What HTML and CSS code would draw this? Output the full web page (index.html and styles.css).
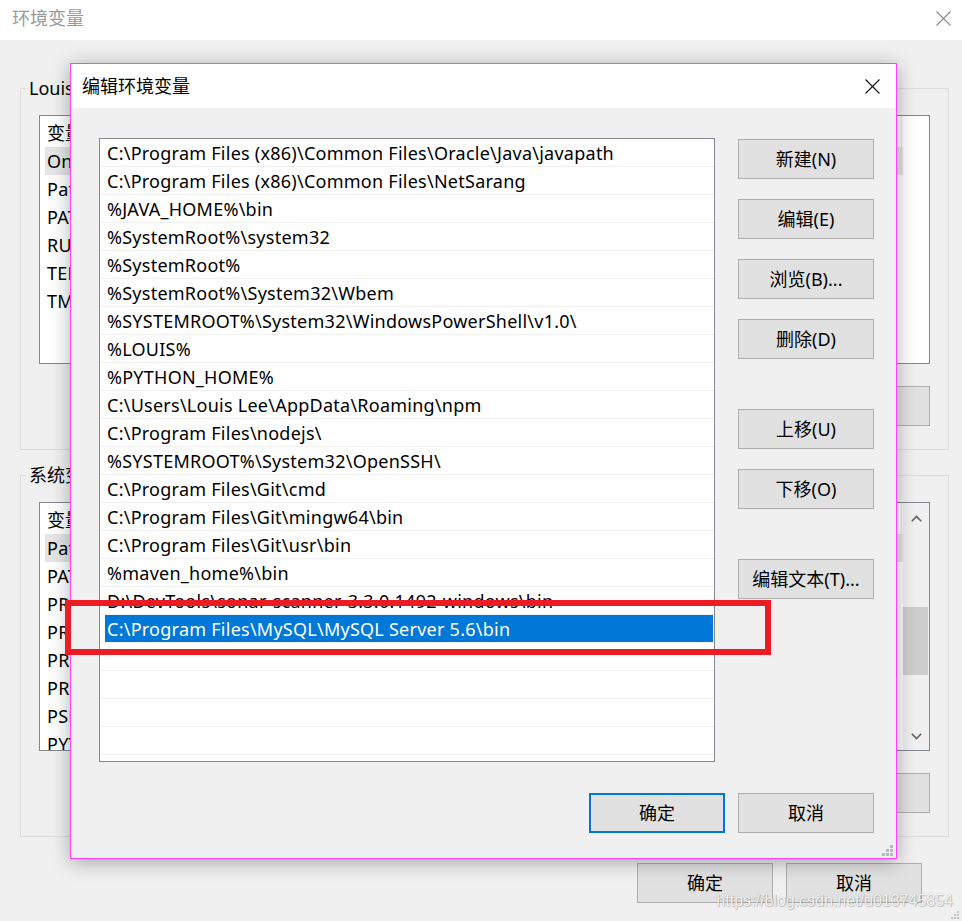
FILE: index.html
```html
<!DOCTYPE html>
<html lang="zh-CN">
<head>
<meta charset="utf-8">
<title>环境变量</title>
<link rel="stylesheet" href="styles.css">
</head>
<body>
<div class="win">
  <div class="win-title">
    <span class="win-title-text">环境变量</span>
    <svg class="win-close" width="15" height="15" viewBox="0 0 15 15"><path d="M0.5 0.5L14.5 14.5M14.5 0.5L0.5 14.5" stroke="#8a8a8a" stroke-width="1.1" fill="none"/></svg>
  </div>
  <div class="win-body">
    <fieldset class="group">
      <legend>Louis Lee 的用户变量(U)</legend>
      <div class="lv">
        <div class="lv-main">
          <div class="lv-head"><span class="col-name">变量</span><span class="col-val">值</span></div>
          <div class="lv-row sel"><span class="col-name">OneDrive</span><span class="col-val">C:\Users\Louis Lee\OneDrive</span></div>
          <div class="lv-row"><span class="col-name">Path</span><span class="col-val">C:\Users\Louis Lee\AppData\Local\Microsoft\WindowsApps;</span></div>
          <div class="lv-row"><span class="col-name">PATHEXT</span><span class="col-val">.COM;.EXE;.BAT;.CMD</span></div>
          <div class="lv-row"><span class="col-name">RUBYOPT</span><span class="col-val">-Eutf-8</span></div>
          <div class="lv-row"><span class="col-name">TEMP</span><span class="col-val">%USERPROFILE%\AppData\Local\Temp</span></div>
          <div class="lv-row"><span class="col-name">TMP</span><span class="col-val">%USERPROFILE%\AppData\Local\Temp</span></div>
        </div>
      </div>
      <div class="group-btns">
        <button class="btn">新建(N)...</button>
        <button class="btn">编辑(E)...</button>
        <button class="btn">删除(D)</button>
      </div>
    </fieldset>
    <fieldset class="group group-sys">
      <legend>系统变量(S)</legend>
      <div class="lv">
        <div class="lv-main">
          <div class="lv-head"><span class="col-name">变量</span><span class="col-val">值</span></div>
          <div class="lv-row sel"><span class="col-name">Path</span><span class="col-val">C:\Program Files (x86)\Common Files\Oracle\Java\javapath;</span></div>
          <div class="lv-row"><span class="col-name">PATHEXT</span><span class="col-val">.COM;.EXE;.BAT;.CMD;.VBS;.VBE;.JS;.JSE;.WSF;.WSH;.MSC</span></div>
          <div class="lv-row"><span class="col-name">PROCESSOR_ARCHITECTURE</span><span class="col-val">AMD64</span></div>
          <div class="lv-row"><span class="col-name">PROCESSOR_IDENTIFIER</span><span class="col-val">Intel64 Family 6 Model 142</span></div>
          <div class="lv-row"><span class="col-name">PROCESSOR_LEVEL</span><span class="col-val">6</span></div>
          <div class="lv-row"><span class="col-name">PROCESSOR_REVISION</span><span class="col-val">8e0a</span></div>
          <div class="lv-row"><span class="col-name">PSModulePath</span><span class="col-val">%ProgramFiles%\WindowsPowerShell\Modules</span></div>
          <div class="lv-row"><span class="col-name">PYTHON_HOME</span><span class="col-val">D:\Python37</span></div>
        </div>
        <div class="vscroll">
          <div class="vs-btn vs-up"><svg width="11" height="7" viewBox="0 0 11 7"><path d="M0.8 6.2L5.5 1.5L10.2 6.2" stroke="#606060" stroke-width="1.6" fill="none"/></svg></div>
          <div class="vs-track"><div class="vs-thumb"></div></div>
          <div class="vs-btn vs-down"><svg width="11" height="7" viewBox="0 0 11 7"><path d="M0.8 0.8L5.5 5.5L10.2 0.8" stroke="#606060" stroke-width="1.6" fill="none"/></svg></div>
        </div>
      </div>
      <div class="group-btns">
        <button class="btn">新建(W)...</button>
        <button class="btn">编辑(I)...</button>
        <button class="btn">删除(L)</button>
      </div>
    </fieldset>
    <div class="win-foot">
      <button class="btn">确定</button>
      <button class="btn">取消</button>
    </div>
  </div>
</div>

<div class="dlg">
  <div class="dlg-title">
    <span class="dlg-title-text">编辑环境变量</span>
    <svg class="dlg-close" width="15" height="15" viewBox="0 0 15 15"><path d="M0.5 0.5L14.5 14.5M14.5 0.5L0.5 14.5" stroke="#111" stroke-width="1.1" fill="none"/></svg>
  </div>
  <div class="dlg-body">
    <div class="dlg-main">
      <div class="plist">
        <div class="prow"><span class="pcell">C:\Program Files (x86)\Common Files\Oracle\Java\javapath</span></div>
        <div class="prow"><span class="pcell">C:\Program Files (x86)\Common Files\NetSarang</span></div>
        <div class="prow"><span class="pcell">%JAVA_HOME%\bin</span></div>
        <div class="prow"><span class="pcell">%SystemRoot%\system32</span></div>
        <div class="prow"><span class="pcell">%SystemRoot%</span></div>
        <div class="prow"><span class="pcell">%SystemRoot%\System32\Wbem</span></div>
        <div class="prow"><span class="pcell">%SYSTEMROOT%\System32\WindowsPowerShell\v1.0\</span></div>
        <div class="prow"><span class="pcell">%LOUIS%</span></div>
        <div class="prow"><span class="pcell">%PYTHON_HOME%</span></div>
        <div class="prow"><span class="pcell">C:\Users\Louis Lee\AppData\Roaming\npm</span></div>
        <div class="prow"><span class="pcell">C:\Program Files\nodejs\</span></div>
        <div class="prow"><span class="pcell">%SYSTEMROOT%\System32\OpenSSH\</span></div>
        <div class="prow"><span class="pcell">C:\Program Files\Git\cmd</span></div>
        <div class="prow"><span class="pcell">C:\Program Files\Git\mingw64\bin</span></div>
        <div class="prow"><span class="pcell">C:\Program Files\Git\usr\bin</span></div>
        <div class="prow"><span class="pcell">%maven_home%\bin</span></div>
        <div class="prow"><span class="pcell">D:\DevTools\sonar-scanner-3.3.0.1492-windows\bin</span></div>
        <div class="prow sel"><span class="pcell">C:\Program Files\MySQL\MySQL Server 5.6\bin</span></div>
        <div class="prow"><span class="pcell"></span></div>
        <div class="prow"><span class="pcell"></span></div>
        <div class="prow"><span class="pcell"></span></div>
        <div class="prow"><span class="pcell"></span></div>
      </div>
      <div class="dlg-side">
        <button class="btn">新建(N)</button>
        <button class="btn">编辑(E)</button>
        <button class="btn">浏览(B)...</button>
        <button class="btn">删除(D)</button>
        <button class="btn btn-gap">上移(U)</button>
        <button class="btn">下移(O)</button>
        <button class="btn btn-gap">编辑文本(T)...</button>
      </div>
    </div>
    <div class="dlg-foot">
      <button class="btn btn-default">确定</button>
      <button class="btn">取消</button>
    </div>
  </div>
  <svg class="grip" width="11" height="11" viewBox="0 0 11 11" fill="#b8b8b8"><rect x="8" y="0" width="3" height="3"/><rect x="4" y="4" width="3" height="3"/><rect x="8" y="4" width="3" height="3"/><rect x="0" y="8" width="3" height="3"/><rect x="4" y="8" width="3" height="3"/><rect x="8" y="8" width="3" height="3"/></svg>
</div>

<div class="annot"></div>
<div class="watermark">https://blog.csdn.net/u013745854</div>
<svg class="page-grip" width="9" height="9" viewBox="0 0 9 9" fill="#c4c4c4"><rect x="6" y="0" width="2" height="2"/><rect x="3" y="3" width="2" height="2"/><rect x="6" y="3" width="2" height="2"/><rect x="0" y="6" width="2" height="2"/><rect x="3" y="6" width="2" height="2"/><rect x="6" y="6" width="2" height="2"/></svg>
</body>
</html>
```

FILE: styles.css
```css
* { box-sizing: border-box; }

html, body {
  margin: 0;
  padding: 0;
}

body {
  width: 962px;
  height: 921px;
  overflow: hidden;
  position: relative;
  background: #f0f0f0;
  color: #000;
  font-family: "Noto Sans", "Noto Sans CJK SC", sans-serif;
  font-size: 18px;
}

/* ---------- background window ---------- */
.win {
  width: 962px;
  height: 921px;
  display: flex;
  flex-direction: column;
}

.win-title {
  height: 40px;
  flex: none;
  background: #fff;
  display: flex;
  align-items: center;
  justify-content: space-between;
  padding: 0 11px 4px 12px;
}

.win-title-text {
  font-size: 18px;
  color: #9a9a9a;
  line-height: 24px;
}

.win-close { display: block; }

.win-body {
  flex: 1;
  padding-top: 36px;
}

.group {
  width: 929px;
  margin: 0 0 0 20px;
  padding: 0 18px 23px 18px;
  border: 1px solid #dcdcdc;
  min-inline-size: 0;
}

.group-sys { margin-top: 13px; }

.group legend {
  margin-left: -13px;
  padding: 0 3px;
  font-size: 18px;
  line-height: 24px;
  height: 24px;
}

.lv {
  margin-top: 15px;
  height: 249px;
  border: 1px solid #828790;
  background: #fff;
  display: flex;
  overflow: hidden;
}

.lv-main {
  flex: 1;
  overflow: hidden;
}

.lv-head {
  height: 31px;
  display: flex;
  align-items: center;
  width: 862px;
  padding-left: 7px;
  border-right: 1px solid #e5e5e5;
  font-size: 18px;
}

.lv-row {
  height: 28px;
  width: 858px;
  margin-left: 5px;
  padding-left: 2px;
  display: flex;
  align-items: center;
  white-space: nowrap;
  font-size: 18px;
  letter-spacing: 0.25px;
}

.lv-row.sel { background: #e5e5e5; }

.col-name { width: 300px; flex: none; }
.col-val { flex: none; }

.vscroll {
  width: 26px;
  flex: none;
  background: #f0f0f0;
  display: flex;
  flex-direction: column;
}

.vs-btn {
  display: flex;
  align-items: center;
  justify-content: center;
}

.vs-up { height: 30px; }
.vs-down { height: 28px; }

.vs-track { flex: 1; }

.vs-thumb {
  margin: 74px 1px 0 0;
  height: 68px;
  background: #cdcdcd;
}

.group-btns {
  margin-top: 22px;
  display: flex;
  justify-content: flex-end;
  gap: 13px;
}

.btn {
  width: 136px;
  height: 40px;
  padding: 0;
  margin: 0;
  background: #e1e1e1;
  border: 1px solid #adadad;
  border-radius: 0;
  color: #000;
  font-family: "Noto Sans", "Noto Sans CJK SC", sans-serif;
  font-size: 18px;
  line-height: 1;
}

.win-foot {
  margin-top: 26px;
  padding-right: 40px;
  display: flex;
  justify-content: flex-end;
  gap: 13px;
}

/* ---------- dialog ---------- */
.dlg {
  position: absolute;
  left: 70px;
  top: 63px;
  width: 827px;
  height: 796px;
  border: 1px solid #ff40ff;
  background: #f0f0f0;
  box-shadow: 0 3px 18px rgba(0, 0, 0, 0.32);
}

.dlg-title {
  height: 44px;
  background: #fff;
  display: flex;
  align-items: center;
  justify-content: space-between;
  padding: 0 16px 0 11px;
}

.dlg-title-text {
  font-size: 18px;
  line-height: 24px;
}

.dlg-close { display: block; }

.dlg-body {
  padding: 30px 22px 0 28px;
}

.dlg-main {
  display: flex;
  gap: 23px;
}

.plist {
  width: 616px;
  height: 624px;
  border: 1px solid #828790;
  background: #fff;
  overflow: hidden;
}

.prow {
  height: 28px;
  border-bottom: 1px solid #f0f0f0;
}

.pcell {
  display: block;
  height: 27px;
  margin: 0 1px 0 5px;
  padding-left: 2px;
  line-height: 28px;
  white-space: nowrap;
  font-size: 18px;
  letter-spacing: 0.25px;
}

.prow.sel .pcell {
  background: #0078d7;
  color: #fff;
}

.dlg-side {
  width: 136px;
  padding-top: 1px;
  display: flex;
  flex-direction: column;
  gap: 20px;
}

.btn-gap { margin-top: 30px; }

.dlg-foot {
  margin-top: 31px;
  display: flex;
  justify-content: flex-end;
  gap: 13px;
}

.btn-default { border: 2px solid #0078d7; }

.grip {
  position: absolute;
  right: 3px;
  bottom: 2px;
}

/* ---------- overlays ---------- */
.annot {
  position: absolute;
  left: 65px;
  top: 600px;
  width: 706px;
  height: 55px;
  border: 6px solid #ed1c24;
}

.watermark {
  position: absolute;
  right: 9px;
  top: 892px;
  font-family: "Liberation Sans", Arial, sans-serif;
  font-size: 16px;
  line-height: 18px;
  color: rgba(255, 255, 255, 0.92);
  text-shadow: 0 0 1px rgba(0, 0, 0, 0.35), 1px 1px 1px rgba(0, 0, 0, 0.18);
}

.page-grip {
  position: absolute;
  right: 2px;
  bottom: 1px;
}
```
